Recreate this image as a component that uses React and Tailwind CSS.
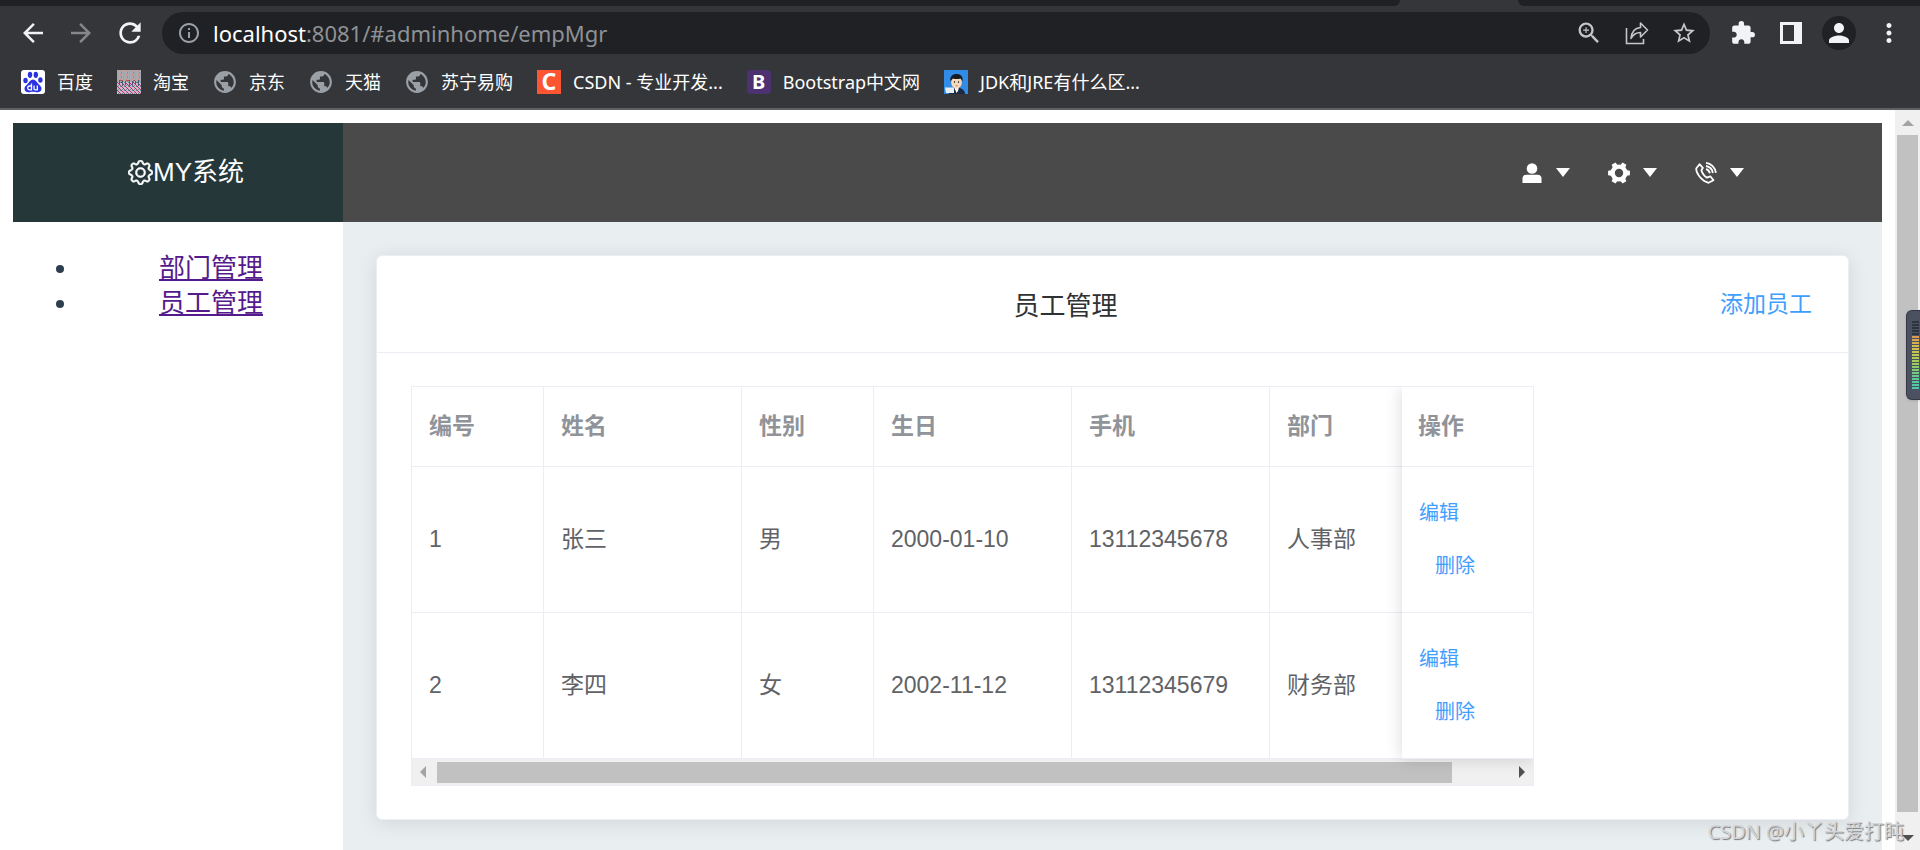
import { BsGear } from "react-icons/bs";
import { MdArrowBack, MdArrowForward, MdRefresh, MdInfoOutline, MdZoomIn, MdStarBorder, MdExtension, MdPublic, MdPerson, MdMoreVert } from "react-icons/md";

const bookmarks = [
	{ name: "百度", icon: "baidu" },
	{ name: "淘宝", icon: "taobao" },
	{ name: "京东", icon: "globe" },
	{ name: "天猫", icon: "globe" },
	{ name: "苏宁易购", icon: "globe" },
	{ name: "CSDN - 专业开发...", icon: "csdn" },
	{ name: "Bootstrap中文网", icon: "bootstrap" },
	{ name: "JDK和JRE有什么区...", icon: "jdk" },
];

const employees = [
	{ id: 1, name: "张三", sex: "男", birthday: "2000-01-10", phone: "13112345678", dept: "人事部" },
	{ id: 2, name: "李四", sex: "女", birthday: "2002-11-12", phone: "13112345679", dept: "财务部" },
];

const meterColors = [
	"#2f3340", "#2f3340", "#2f3340", "#2f3340", "#2f3340",
	"#dc9a58", "#d8a655", "#d5b052", "#d2b950", "#cfc04f", "#c9c650", "#bfc853", "#b2c957", "#a6ca5c",
	"#99ca63", "#8dca6c", "#80ca76", "#74ca81", "#69c98c", "#5fc896", "#57c7a0", "#52c6a9", "#4fc5b0",
];

const BaiduIcon = () => (
	<svg width="24" height="24" viewBox="0 0 24 24">
		<rect width="24" height="24" rx="3" fill="#fff" />
		<g fill="#2932e1">
			<ellipse cx="4.5" cy="10.5" rx="2.2" ry="2.8" />
			<ellipse cx="9" cy="4.8" rx="2.2" ry="3.1" />
			<ellipse cx="14.8" cy="4.8" rx="2.2" ry="3.1" />
			<ellipse cx="19.4" cy="10" rx="2.2" ry="2.8" />
			<path d="M12 9.5c2.6 0 3.6 2.4 5.2 4.2 1.7 1.7 3.3 2.8 3.3 5 0 2.4-1.9 3.6-4 3.5-1.7 0-2.8-.5-4.5-.5s-2.8.5-4.5.5c-2.1.1-4-1.1-4-3.5 0-2.2 1.6-3.3 3.3-5C8.4 11.9 9.4 9.5 12 9.5z" />
		</g>
		<g fill="none" stroke="#fff" strokeWidth="1.3">
			<path d="M10.5 13.5v6.3H8.6a1.8 1.8 0 0 1 0-3.8h1.9M13 15.5v3c0 1 .5 1.3 1.5 1.3h1.8v-4.3" />
		</g>
	</svg>
);

const TaobaoIcon = () => (
	<svg width="24" height="24" viewBox="0 0 24 24">
		<defs>
			<pattern id="tb-top" width="6" height="4" patternUnits="userSpaceOnUse">
				<rect width="6" height="4" fill="#a9a9b2" />
				<path d="M0 0h1v4H0z" fill="#8fb0a0" />
				<path d="M3 0h1v2H3z" fill="#c98f88" />
				<path d="M4 2h1v2H4z" fill="#8292b5" />
			</pattern>
			<pattern id="tb-bottom" width="4" height="4" patternUnits="userSpaceOnUse">
				<rect width="4" height="4" fill="#d6b4cc" />
				<path d="M0 0h1v1H0zM2 2h1v1H2z" fill="#5e4f75" />
				<path d="M1 1h1v1H1zM3 3h1v1H3z" fill="#b5407f" />
				<path d="M3 0h1v1H3zM1 3h1v1H1z" fill="#5b9a8e" />
			</pattern>
		</defs>
		<rect width="24" height="12" fill="url(#tb-top)" />
		<rect y="12" width="24" height="12" fill="url(#tb-bottom)" />
		<path d="M2 10h1v5H2zM5 10h1v6H5zM8 11h1v4H8zM12 10h1v6h-1zM15 11h1v4h-1zM18 11h1v4h-1zM21 10h1v6h-1z" fill="#4c5a78" />
		<path d="M3 10h3v1H3zM9 10h3v1H9zM16 10h2v1h-2z" fill="#b5554f" />
	</svg>
);

const JdkIcon = () => (
	<svg width="24" height="24" viewBox="0 0 24 24">
		<rect width="24" height="24" fill="#318ce7" />
		<path d="M5 24c0-5 3-6.5 7-6.5s9 1.5 9 6.5z" fill="#1d2a3f" />
		<path d="M10 17h5l-1 4-1.5 2z" fill="#fff" />
		<ellipse cx="12.5" cy="12.5" rx="5.3" ry="6" fill="#f6d9bd" />
		<path d="M6.5 11.5C5.5 6.5 8.5 4 12.5 4s7 2.5 6 7.5c-.6-1.5-1.2-2.3-2-3-2 .7-5.5.7-7.5 0-1 .9-2 1.5-2.5 3z" fill="#171a20" />
		<circle cx="10.5" cy="12" r=".7" />
		<circle cx="14.5" cy="12" r=".7" />
		<path d="M11.5 15.8h2.2" stroke="#b5655a" strokeWidth=".8" />
		<path d="M1 17.5h9V23H2z" fill="#e8edf2" />
	</svg>
);

const BookmarkIcon = ({ type }) => {
	if (type === "baidu") return <BaiduIcon />;
	if (type === "taobao") return <TaobaoIcon />;
	if (type === "jdk") return <JdkIcon />;
	if (type === "globe") return <MdPublic viewBox="1 1 22 22" className="w-6 h-6 text-[#9aa0a6]" />;
	if (type === "csdn") {
		return <span className="flex items-center justify-center w-6 h-6 bg-[#fc5531] text-white text-[23px] font-bold leading-none">C</span>;
	}
	return <span className="flex items-center justify-center w-6 h-6 rounded bg-[#4c3173] text-white text-xl font-bold leading-none">B</span>;
};

const ShareIcon = () => (
	<svg width="24" height="24" viewBox="0 0 24 24" fill="none" stroke="currentColor" strokeWidth="1.6">
		<path d="M1.5 7v15.5h17V18" />
		<path d="M6 17.5C6.5 11 10 7 15.5 6.5V2l7 7-7 7v-4.5c-4.5 0-7.5 2-9.5 6z" strokeLinejoin="round" />
	</svg>
);

const UserSolid = () => (
	<svg width="20" height="20" viewBox="0 0 20 20" fill="currentColor">
		<circle cx="10" cy="5.5" r="5.3" />
		<path d="M.5 20v-4.5C.5 13 2 11.8 4.5 11.8h11c2.5 0 4 1.2 4 3.7V20z" />
	</svg>
);

const GearSolid = () => (
	<svg width="22" height="22" viewBox="-11 -11 22 22" fill="currentColor">
		<circle r="6.4" fill="none" stroke="currentColor" strokeWidth="4.4" />
		{[0, 60, 120, 180, 240, 300].map((deg) => (
			<path key={deg} d="M6 -3L10.9 -2.2V2.2L6 3z" transform={`rotate(${deg})`} />
		))}
	</svg>
);

const PhoneOutline = () => (
	<svg width="22" height="22" viewBox="0 0 22 22" fill="none" stroke="currentColor" strokeWidth="1.8" strokeLinejoin="round">
		<path d="M4.5 2.2L1.2 6.5C1.2 12 7.5 19.5 13.5 20.8L18.5 18.2 15.3 14.3 11.9 15.6C9.8 14.5 7.2 11 6.4 8.3L7.9 5.8z" />
		<path d="M11 7.2c2 .5 3.3 1.8 3.9 4" />
		<path d="M11 4c3.6.6 6.2 3.2 6.9 7" />
		<path d="M11 .9c5.2.5 9.2 4.6 9.9 9.9" />
	</svg>
);

const Caret = () => (
	<svg width="14" height="9" viewBox="0 0 14 9" fill="currentColor">
		<path d="M0 0h14L7 9z" />
	</svg>
);

const Browser = () => (
	<header className="bg-[#35363a] border-b-2 border-[#5f6064] font-['Noto_Sans','Noto_Sans_CJK_SC',sans-serif]">
		{/* tab strip */}
		<div className="flex h-[6px] justify-between">
			<div className="flex-1 bg-[#202124] rounded-br-md"></div>
			<div className="w-[118px]"></div>
			<div className="w-[402px] bg-[#202124] rounded-bl-md"></div>
		</div>

		<div className="flex items-center pt-[6px] px-[18px]">
			<div className="flex items-center gap-[18px] text-[#f1f3f4]">
				<button aria-label="后退"><MdArrowBack className="w-[30px] h-[30px]" /></button>
				<button aria-label="前进" className="text-[#86878a]"><MdArrowForward className="w-[30px] h-[30px]" /></button>
				<button aria-label="刷新"><MdRefresh className="w-8 h-8" /></button>
			</div>
			<div className="flex flex-1 items-center h-[42px] ml-4 pl-[15px] pr-[13px] rounded-full bg-[#202124]">
				<MdInfoOutline className="w-6 h-6 text-[#9aa0a6]" />
				<a href="#adminhome/empMgr" className="flex-1 ml-3 text-[22px] leading-7 text-[#8e9195]">
					<span className="text-white">localhost</span>:8081/#adminhome/empMgr
				</a>
				<div className="flex items-center gap-[22px] text-[#c4c6c9]">
					<button aria-label="缩放"><MdZoomIn className="w-7 h-7" /></button>
					<button aria-label="分享"><ShareIcon /></button>
					<button aria-label="收藏"><MdStarBorder className="w-[26px] h-[26px]" /></button>
				</div>
			</div>
			<div className="flex items-center gap-5 ml-5 text-[#f1f3f4]">
				<button aria-label="扩展程序"><MdExtension className="w-[26px] h-[26px]" /></button>
				<button aria-label="侧边栏" className="w-[22px] h-[22px] ml-1 border-[3px] border-r-[8px] border-[#f1f3f4]"></button>
				<button aria-label="用户" className="flex items-center justify-center w-[34px] h-[34px] rounded-full bg-[#202124]">
					<MdPerson className="w-[30px] h-[30px]" />
				</button>
				<button aria-label="菜单" className="-mx-0.5"><MdMoreVert className="w-[30px] h-[30px]" /></button>
			</div>
		</div>

		<nav className="flex items-center gap-6 h-[54px] pt-px pl-[21px] text-lg leading-6 text-white">
			{bookmarks.map((item) => (
				<a key={item.name} href="#bookmark" className="flex items-center gap-3 whitespace-nowrap">
					<BookmarkIcon type={item.icon} />
					{item.name}
				</a>
			))}
		</nav>
	</header>
);

const TopBar = () => (
	<div className="flex h-[99px] text-white">
		<div className="flex items-center justify-center w-[330px] pl-4 bg-[#253739] text-[26px]">
			<BsGear strokeWidth="0.4" className="w-[25px] h-[25px]" />
			MY系统
		</div>
		<div className="flex flex-1 items-center justify-end gap-[38px] pr-[138px] bg-[#4a4a4a]">
			{[UserSolid, GearSolid, PhoneOutline].map((Icon, i) => (
				<button key={i} aria-label={["用户", "设置", "联系"][i]} className="flex items-center gap-[13px]">
					<span className="flex justify-center w-[22px]"><Icon /></span>
					<Caret />
				</button>
			))}
		</div>
	</div>
);

const th = "border-r border-b border-[#ebeef5] px-[17px] text-left font-bold";
const td = "border-r border-b border-[#ebeef5] px-[17px]";

const EmployeeTable = () => (
	<div className="w-[1123px] border border-[#ebeef5] overflow-hidden">
		<div className="relative">
			<table className="table-fixed w-full border-separate border-spacing-0 text-[23px] text-[#606266]">
				<colgroup>
					<col className="w-[132px]" />
					<col className="w-[198px]" />
					<col className="w-[132px]" />
					<col className="w-[198px]" />
					<col className="w-[198px]" />
					<col className="w-[132px]" />
					<col />
				</colgroup>
				<thead>
					<tr className="h-20 text-[#909399]">
						<th className={th}>编号</th>
						<th className={th}>姓名</th>
						<th className={th}>性别</th>
						<th className={th}>生日</th>
						<th className={th}>手机</th>
						<th className="border-b border-[#ebeef5] px-[17px] text-left font-bold">部门</th>
						<th className="border-b border-[#ebeef5] px-4 text-left font-bold">操作</th>
					</tr>
				</thead>
				<tbody>
					{employees.map((emp) => (
						<tr key={emp.id} className="h-[146px]">
							<td className={td}>{emp.id}</td>
							<td className={td}>{emp.name}</td>
							<td className={td}>{emp.sex}</td>
							<td className={td}>{emp.birthday}</td>
							<td className={td}>{emp.phone}</td>
							<td className="border-b border-[#ebeef5] px-[17px]">{emp.dept}</td>
							<td className="border-b border-[#ebeef5] px-[17px]">
								<div className="flex flex-col items-start gap-[25px] text-xl leading-7 text-[#409eff]">
									<button>编辑</button>
									<button className="ml-4">删除</button>
								</div>
							</td>
						</tr>
					))}
				</tbody>
			</table>
			{/* fixed column shadow */}
			<div className="absolute inset-y-0 right-0 z-10 w-[131px] shadow-[0_0_16px_rgba(0,0,0,0.15)] pointer-events-none"></div>
		</div>
		{/* horizontal scrollbar */}
		<div className="flex items-center h-[26px] px-[6px] bg-[#f0f0f0]">
			<svg width="19" height="12" viewBox="0 0 19 12"><path d="M8 0v12L2 6z" fill="#a3a3a3" /></svg>
			<div className="flex-1 flex">
				<div className="w-[94%] h-[21px] bg-[#c1c1c1]"></div>
			</div>
			<svg width="10" height="12" viewBox="0 0 10 12"><path d="M2 0v12l6-6z" fill="#505050" /></svg>
		</div>
	</div>
);

const VerticalScrollbar = () => (
	<div className="relative flex flex-col items-center w-[25px] pt-[10px] pb-2 bg-[#f0f0f0]">
		<svg width="12" height="7" viewBox="0 0 12 7"><path d="M0 6L6 0l6 6z" fill="#a3a3a3" /></svg>
		<div className="flex-1 w-[21px] mt-2 mb-[23px] bg-[#c1c1c1]"></div>
		<svg width="12" height="7" viewBox="0 0 12 7"><path d="M0 0h12L6 6z" fill="#505050" /></svg>
		{/* level meter docked on the screen edge */}
		<div className="absolute right-0 top-[200px] flex flex-col gap-px w-[14px] pl-[5px] py-[10px] rounded-l-md border border-r-0 border-[#353946] bg-[#4b5161] shadow">
			{meterColors.map((color, i) => (
				<div key={i} className="w-[7px] h-[2px]" style={{ backgroundColor: color }}></div>
			))}
		</div>
	</div>
);

export default function App() {
	return (
		<div className="relative flex flex-col min-h-screen bg-white overflow-hidden font-['Liberation_Sans','Noto_Sans_CJK_SC',sans-serif]">
			<Browser />
			<div className="flex flex-1">
				<div className="flex flex-col flex-1 px-[13px] pt-[13px]">
					<TopBar />
					<div className="flex flex-1">
						<aside className="w-[330px] pt-[29px]">
							<ul className="pl-[66px] list-disc text-[26px] leading-[35px] text-center text-[#2c3e50]">
								<li><a href="#adminhome/deptMgr" className="text-[#551a8b] underline">部门管理</a></li>
								<li><a href="#adminhome/empMgr" className="text-[#551a8b] underline">员工管理</a></li>
							</ul>
						</aside>
						<main className="flex-1 px-[33px] pt-[33px] pb-[30px] bg-[#e9eef1]">
							<section className="rounded-md border border-[#ebeef5] bg-white shadow-[0_3px_20px_rgba(0,0,0,0.1)]">
								<div className="flex items-center h-[97px] pl-[34px] pr-9 pt-1 border-b border-[#ebeef5]">
									<h2 className="flex-1 text-center text-[26px] text-[#303133]">员工管理</h2>
									<button className="pb-1 text-[23px] text-[#409eff]">添加员工</button>
								</div>
								<div className="px-[34px] py-[33px]">
									<EmployeeTable />
								</div>
							</section>
						</main>
					</div>
				</div>
				<VerticalScrollbar />
			</div>
			<div className="absolute right-4 bottom-1 font-['Open_Sans','Noto_Sans_CJK_SC',sans-serif] text-xl leading-7 text-[#d3d5d8] [text-shadow:1px_1px_1px_#777]">CSDN @小丫头爱打盹</div>
		</div>
	);
}
